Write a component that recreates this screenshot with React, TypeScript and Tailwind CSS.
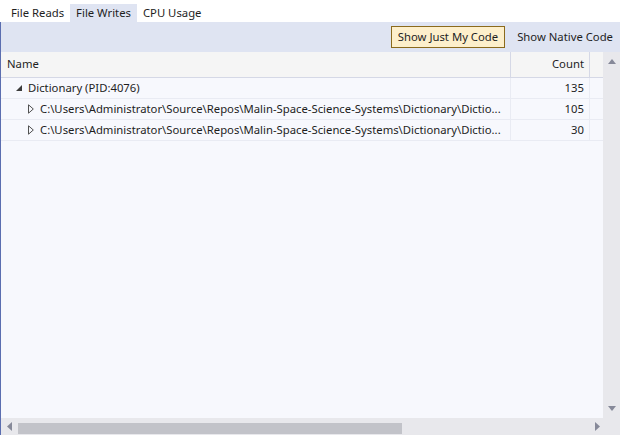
import { ReactNode } from 'react';

const PATH = 'C:\\Users\\Administrator\\Source\\Repos\\Malin-Space-Science-Systems\\Dictionary\\Dictio...';

const ROWS = [
  { depth: 0, expanded: true, label: 'Dictionary (PID:4076)', count: 135 },
  { depth: 1, expanded: false, label: PATH, count: 105 },
  { depth: 1, expanded: false, label: PATH, count: 30 },
];

function Expander({ expanded }: { expanded: boolean }) {
  if (expanded) {
    return (
      <svg width="6" height="6" viewBox="0 0 6 6" className="shrink-0">
        <path d="M6 0 L6 6 L0 6 Z" fill="#3c3c3c" />
      </svg>
    );
  }
  return (
    <svg width="6" height="10" viewBox="0 0 6 10" className="shrink-0">
      <path d="M0.5 0.8 L5.3 5 L0.5 9.2 Z" fill="none" stroke="#505050" strokeWidth="1" />
    </svg>
  );
}

function Arrow({ dir }: { dir: 'up' | 'down' | 'left' | 'right' }) {
  const d = {
    up: 'M0 5 L4 0 L8 5 Z',
    down: 'M0 0 L8 0 L4 5 Z',
    left: 'M5 0 L5 9 L0 4.5 Z',
    right: 'M0 0 L5 4.5 L0 9 Z',
  }[dir];
  const vert = dir === 'up' || dir === 'down';
  return (
    <svg width={vert ? 8 : 5} height={vert ? 5 : 9} viewBox={vert ? '0 0 8 5' : '0 0 5 9'}>
      <path d={d} fill="#868999" />
    </svg>
  );
}

function Tab({ children, active }: { children: ReactNode; active?: boolean }) {
  return (
    <div className={`h-[18px] px-[6px] flex items-center ${active ? 'bg-[#dfe4f2]' : ''}`}>
      {children}
    </div>
  );
}

export default function App() {
  return (
    <div
      className="w-[620px] h-[435px] flex flex-col bg-white text-[11.3px] text-[#1e1e1e] overflow-hidden"
      style={{ fontFamily: '"Noto Sans", "Open Sans", sans-serif' }}
    >
      {/* tabs */}
      <div className="h-[22px] flex items-end pl-[5px] shrink-0">
        <Tab>File Reads</Tab>
        <Tab active>File Writes</Tab>
        <Tab>CPU Usage</Tab>
      </div>

      <div className="flex-1 flex flex-col border-l border-[#5b6eb0] min-h-0">
        {/* toolbar */}
        <div className="h-[30px] bg-[#dfe4f2] flex items-center justify-end gap-[12px] pr-[7px] shrink-0">
          <button className="h-[22px] px-[6px] bg-[#fdefcb] border border-[#8b6a1c] text-[#1e1e1e]">
            Show Just My Code
          </button>
          <span>Show Native Code</span>
        </div>

        <div className="flex-1 flex min-h-0">
          {/* grid */}
          <div className="flex-1 min-w-0 flex flex-col bg-[#f7f8fd]">
            <div className="h-[26px] flex bg-[#f5f5f5] border-b border-[#d5d8e6] shrink-0">
              <div className="flex-1 flex items-center pl-[6px]">Name</div>
              <div className="w-[79px] flex items-center justify-end pr-[5px] border-l border-[#d5d8e6]">Count</div>
              <div className="w-[14px] border-l border-[#d5d8e6]" />
            </div>
            {ROWS.map((r, i) => (
              <div key={i} className="h-[21px] flex border-b border-[#e9ebf3]">
                <div
                  className={`flex-1 min-w-0 flex items-center gap-[6px] ${r.depth === 0 ? 'pl-[15px]' : 'pl-[27px]'}`}
                >
                  <Expander expanded={r.expanded} />
                  <span className="whitespace-nowrap overflow-hidden">{r.label}</span>
                </div>
                <div className="w-[79px] shrink-0 flex items-center justify-end pr-[5px] border-l border-[#e9ebf3]">{r.count}</div>
                <div className="w-[14px] shrink-0 border-l border-[#e9ebf3]" />
              </div>
            ))}
          </div>

          {/* vertical scrollbar */}
          <div className="w-[17px] bg-[#e8e8ec] flex flex-col items-center justify-between pt-[7px] pb-[7px] shrink-0">
            <Arrow dir="up" />
            <Arrow dir="down" />
          </div>
        </div>

        {/* horizontal scrollbar */}
        <div className="h-[17px] bg-[#e8e8ec] flex items-center shrink-0">
          <div className="w-[17px] flex justify-center">
            <Arrow dir="left" />
          </div>
          <div className="flex-1 flex h-full items-center">
            <div className="w-[384px] h-[11px] mt-[4px] bg-[#c2c3c9]" />
          </div>
          <div className="w-[27px] flex justify-start pl-[2px]">
            <Arrow dir="right" />
          </div>
        </div>
      </div>
    </div>
  );
}
